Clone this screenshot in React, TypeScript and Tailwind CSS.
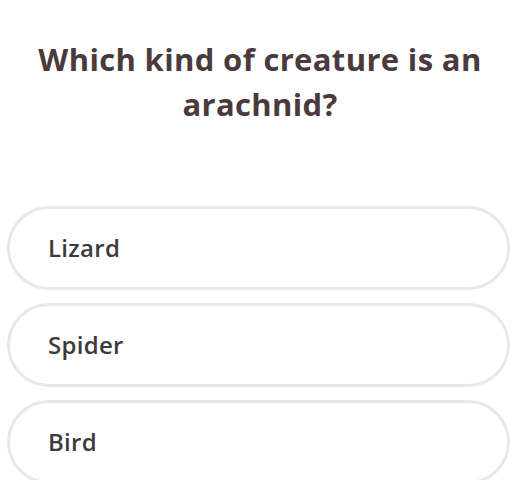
const options = ['Lizard', 'Spider', 'Bird'];

export default function App() {
  return (
    <div className="h-[480px] w-[520px] overflow-hidden bg-white font-['Open_Sans','Noto_Sans',sans-serif]">
      <h1 className="mx-auto w-[500px] pt-[37px] text-center text-[31px] font-bold leading-[45px] tracking-[0.35px] text-[#4a3a3b]">
        Which kind of creature is an arachnid?
      </h1>
      <div className="mt-[79px] flex flex-col gap-[13px] pl-[7px] pr-[10px]">
        {options.map((opt) => (
          <button
            key={opt}
            className="flex h-[84px] items-center rounded-[42px] border-[3px] border-[#e8e8e8] bg-white pl-[38px] text-left text-[24px] font-semibold tracking-[0.3px] text-[#3e3a3b]"
          >
            {opt}
          </button>
        ))}
      </div>
    </div>
  );
}
